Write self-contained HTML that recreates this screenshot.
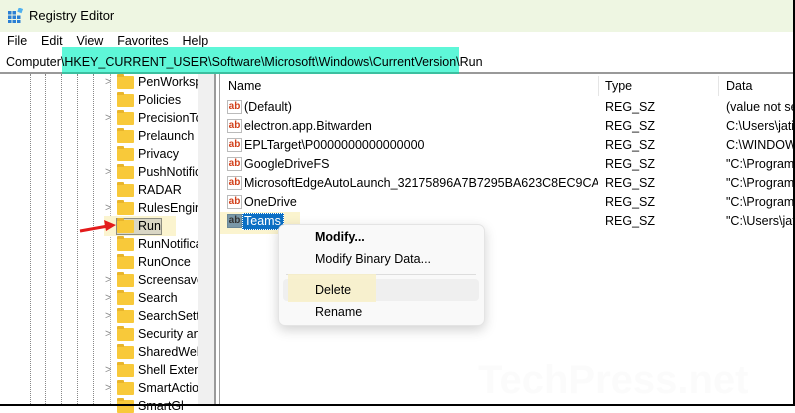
<!DOCTYPE html><html><head><style>
*{margin:0;padding:0;box-sizing:border-box}
body{width:795px;height:406px;overflow:hidden;background:#fff;font-family:"Liberation Sans",sans-serif;font-size:12px;color:#000;position:relative}
.a{position:absolute;white-space:nowrap}
.dv{position:absolute;top:74px;height:332px;border-left:1px dotted #888}
.fold{position:absolute;width:17px;height:13px;background:#f8c93a;border-radius:1px}
.fold:before{content:"";position:absolute;left:0;top:-2px;width:7px;height:3px;background:#e9b52b;border-radius:1px 1px 0 0}
.t{position:absolute;left:138px;font-size:12.5px;white-space:nowrap;width:60px;overflow:hidden}
.ch{position:absolute;left:105px;color:#888;font-size:11px}
.ab{position:absolute;left:227px;width:15px;height:14px;border:1px solid #bbb;background:#fff;color:#d2401a;font-weight:bold;font-size:10px;line-height:11px;text-align:center}
.n{position:absolute;left:244px;font-size:12.5px;white-space:nowrap}
.ty{position:absolute;left:605px;font-size:12.5px;white-space:nowrap}
.d{position:absolute;left:726px;width:67px;overflow:hidden;font-size:12.5px;white-space:nowrap}
</style></head><body>
<div class="a" style="left:0;top:0;width:795px;height:32px;background:#eef6e2"></div>
<svg class="a" style="left:8px;top:8px" width="15" height="15"><g fill="#2a7fd4"><rect x="0" y="3" width="3.5" height="3.5"/><rect x="4.5" y="3" width="3.5" height="3.5"/><rect x="0" y="7.5" width="3.5" height="3.5"/><rect x="4.5" y="7.5" width="3.5" height="3.5"/><rect x="9" y="7.5" width="3.5" height="3.5"/><rect x="0" y="12" width="3.5" height="3"/><rect x="4.5" y="12" width="3.5" height="3"/><rect x="9" y="12" width="3.5" height="3"/></g><rect x="10" y="0" width="4.5" height="4.5" fill="#4fb0ef" transform="rotate(20 12 2)"/></svg>
<div class="a" style="left:29px;top:8px;font-size:13px">Registry Editor</div>
<div class="a" style="left:7px;top:34px;font-size:12.5px">File&nbsp;&nbsp;&nbsp; Edit&nbsp;&nbsp;&nbsp; View&nbsp;&nbsp;&nbsp; Favorites&nbsp;&nbsp;&nbsp; Help</div>
<div class="a" style="left:62px;top:47px;width:397px;height:26px;background:#5ef7d8"></div>
<div class="a" style="left:6px;top:55px;font-size:12.5px">Computer\HKEY_CURRENT_USER\Software\Microsoft\Windows\CurrentVersion\Run</div>
<div class="a" style="left:0;top:72px;width:795px;height:2px;background:#999"></div>
<div class="a" style="left:62px;top:72px;width:397px;height:2px;background:#3bbf9f"></div>
<div class="dv" style="left:30px"></div><div class="dv" style="left:45px"></div><div class="dv" style="left:61px"></div><div class="dv" style="left:77px"></div><div class="dv" style="left:93px"></div><div class="dv" style="left:110px;border-left-color:#aaa"></div>
<div class="a" style="left:198px;top:74px;width:16px;height:332px;background:#f0f0f0"></div>
<div class="a" style="left:214px;top:74px;width:2px;height:332px;background:#9a9a9a"></div>
<div class="a" style="left:219px;top:74px;width:1px;height:332px;background:#a0a0a0"></div>
<div class="a" style="left:104px;top:216px;width:72px;height:20px;background:#fbf4cf"></div>
<div class="a" style="left:116px;top:218px;width:46px;height:17px;background:#d9d6c4;border:1px solid #8c8c80"></div>
<div class="ch" style="top:76px">&gt;</div><div class="fold" style="left:117px;top:76px"></div><div class="t" style="top:75px">PenWorksp</div>
<div class="fold" style="left:117px;top:94px"></div><div class="t" style="top:93px">Policies</div>
<div class="ch" style="top:112px">&gt;</div><div class="fold" style="left:117px;top:112px"></div><div class="t" style="top:111px">PrecisionTc</div>
<div class="fold" style="left:117px;top:130px"></div><div class="t" style="top:129px">Prelaunch</div>
<div class="fold" style="left:117px;top:148px"></div><div class="t" style="top:147px">Privacy</div>
<div class="ch" style="top:166px">&gt;</div><div class="fold" style="left:117px;top:166px"></div><div class="t" style="top:165px">PushNotific</div>
<div class="fold" style="left:117px;top:184px"></div><div class="t" style="top:183px">RADAR</div>
<div class="ch" style="top:202px">&gt;</div><div class="fold" style="left:117px;top:202px"></div><div class="t" style="top:201px">RulesEngin</div>
<div class="fold" style="left:117px;top:220px"></div><div class="t" style="top:219px">Run</div>
<div class="fold" style="left:117px;top:238px"></div><div class="t" style="top:237px">RunNotifica</div>
<div class="fold" style="left:117px;top:256px"></div><div class="t" style="top:255px">RunOnce</div>
<div class="ch" style="top:274px">&gt;</div><div class="fold" style="left:117px;top:274px"></div><div class="t" style="top:273px">Screensave</div>
<div class="ch" style="top:292px">&gt;</div><div class="fold" style="left:117px;top:292px"></div><div class="t" style="top:291px">Search</div>
<div class="ch" style="top:310px">&gt;</div><div class="fold" style="left:117px;top:310px"></div><div class="t" style="top:309px">SearchSetti</div>
<div class="ch" style="top:328px">&gt;</div><div class="fold" style="left:117px;top:328px"></div><div class="t" style="top:327px">Security an</div>
<div class="fold" style="left:117px;top:346px"></div><div class="t" style="top:345px">SharedWeb</div>
<div class="ch" style="top:364px">&gt;</div><div class="fold" style="left:117px;top:364px"></div><div class="t" style="top:363px">Shell Extens</div>
<div class="ch" style="top:382px">&gt;</div><div class="fold" style="left:117px;top:382px"></div><div class="t" style="top:381px">SmartActio</div>
<div class="fold" style="left:117px;top:400px"></div><div class="t" style="top:399px">SmartGl</div>
<svg class="a" style="left:78px;top:219px" width="40" height="15"><path d="M2 12 L30 7" stroke="#e31b1b" stroke-width="3"/><path d="M26 1 L38 6 L28 12 Z" fill="#e31b1b"/></svg>
<div class="a" style="left:598px;top:76px;width:1px;height:20px;background:#e5e5e5"></div>
<div class="a" style="left:718px;top:76px;width:1px;height:20px;background:#e5e5e5"></div>
<div class="a" style="left:228px;top:79px;font-size:12.5px">Name</div>
<div class="a" style="left:605px;top:79px;font-size:12.5px">Type</div>
<div class="a" style="left:726px;top:79px;font-size:12.5px">Data</div>
<div class="ab" style="top:100px">ab</div><div class="n" style="top:100px">(Default)</div><div class="ty" style="top:100px">REG_SZ</div><div class="d" style="top:100px">(value not set)</div>
<div class="ab" style="top:119px">ab</div><div class="n" style="top:119px">electron.app.Bitwarden</div><div class="ty" style="top:119px">REG_SZ</div><div class="d" style="top:119px">C:\Users\jatin</div>
<div class="ab" style="top:138px">ab</div><div class="n" style="top:138px">EPLTarget\P0000000000000000</div><div class="ty" style="top:138px">REG_SZ</div><div class="d" style="top:138px">C:\WINDOWS</div>
<div class="ab" style="top:157px">ab</div><div class="n" style="top:157px">GoogleDriveFS</div><div class="ty" style="top:157px">REG_SZ</div><div class="d" style="top:157px">"C:\Program</div>
<div class="ab" style="top:176px">ab</div><div class="n" style="top:176px;width:354px;overflow:hidden">MicrosoftEdgeAutoLaunch_32175896A7B7295BA623C8EC9CA37827</div><div class="ty" style="top:176px">REG_SZ</div><div class="d" style="top:176px">"C:\Program</div>
<div class="ab" style="top:195px">ab</div><div class="n" style="top:195px">OneDrive</div><div class="ty" style="top:195px">REG_SZ</div><div class="d" style="top:195px">"C:\Program</div>
<div class="a" style="left:220px;top:212px;width:80px;height:22px;background:#fbf4cf"></div>
<div class="ab" style="top:214px;background:#7a98a8;color:#333;border-color:#6a8898">ab</div>
<div class="a" style="left:242px;top:213px;width:42px;height:17px;background:#0c6fc4;border:1px dotted #fff"></div>
<div class="n" style="top:214px;color:#fff">Teams</div><div class="ty" style="top:214px">REG_SZ</div><div class="d" style="top:214px">"C:\Users\jati</div>
<div class="a" style="left:478px;top:358px;font-size:40px;font-weight:bold;color:#fbfbfb">TechPress.net</div>
<div class="a" style="left:793px;top:0;width:2px;height:406px;background:#000"></div>
<div class="a" style="left:0;top:404px;width:795px;height:2px;background:#000"></div>
<div class="a" style="left:278px;top:224px;width:207px;height:102px;background:#f9f9f9;border:1px solid #e4e4e4;border-radius:7px;box-shadow:0 4px 12px rgba(0,0,0,.18)"></div>
<div class="a" style="left:315px;top:230px;font-weight:bold;font-size:12.5px">Modify...</div>
<div class="a" style="left:315px;top:252px;font-size:12.5px">Modify Binary Data...</div>
<div class="a" style="left:286px;top:274px;width:190px;height:1px;background:#ddd"></div>
<div class="a" style="left:283px;top:279px;width:196px;height:22px;background:#efefef;border-radius:4px"></div>
<div class="a" style="left:288px;top:274px;width:88px;height:28px;background:#f8f0c8;opacity:.85"></div>
<div class="a" style="left:315px;top:283px;font-size:12.5px">Delete</div>
<div class="a" style="left:315px;top:305px;font-size:12.5px">Rename</div>
</body></html>
